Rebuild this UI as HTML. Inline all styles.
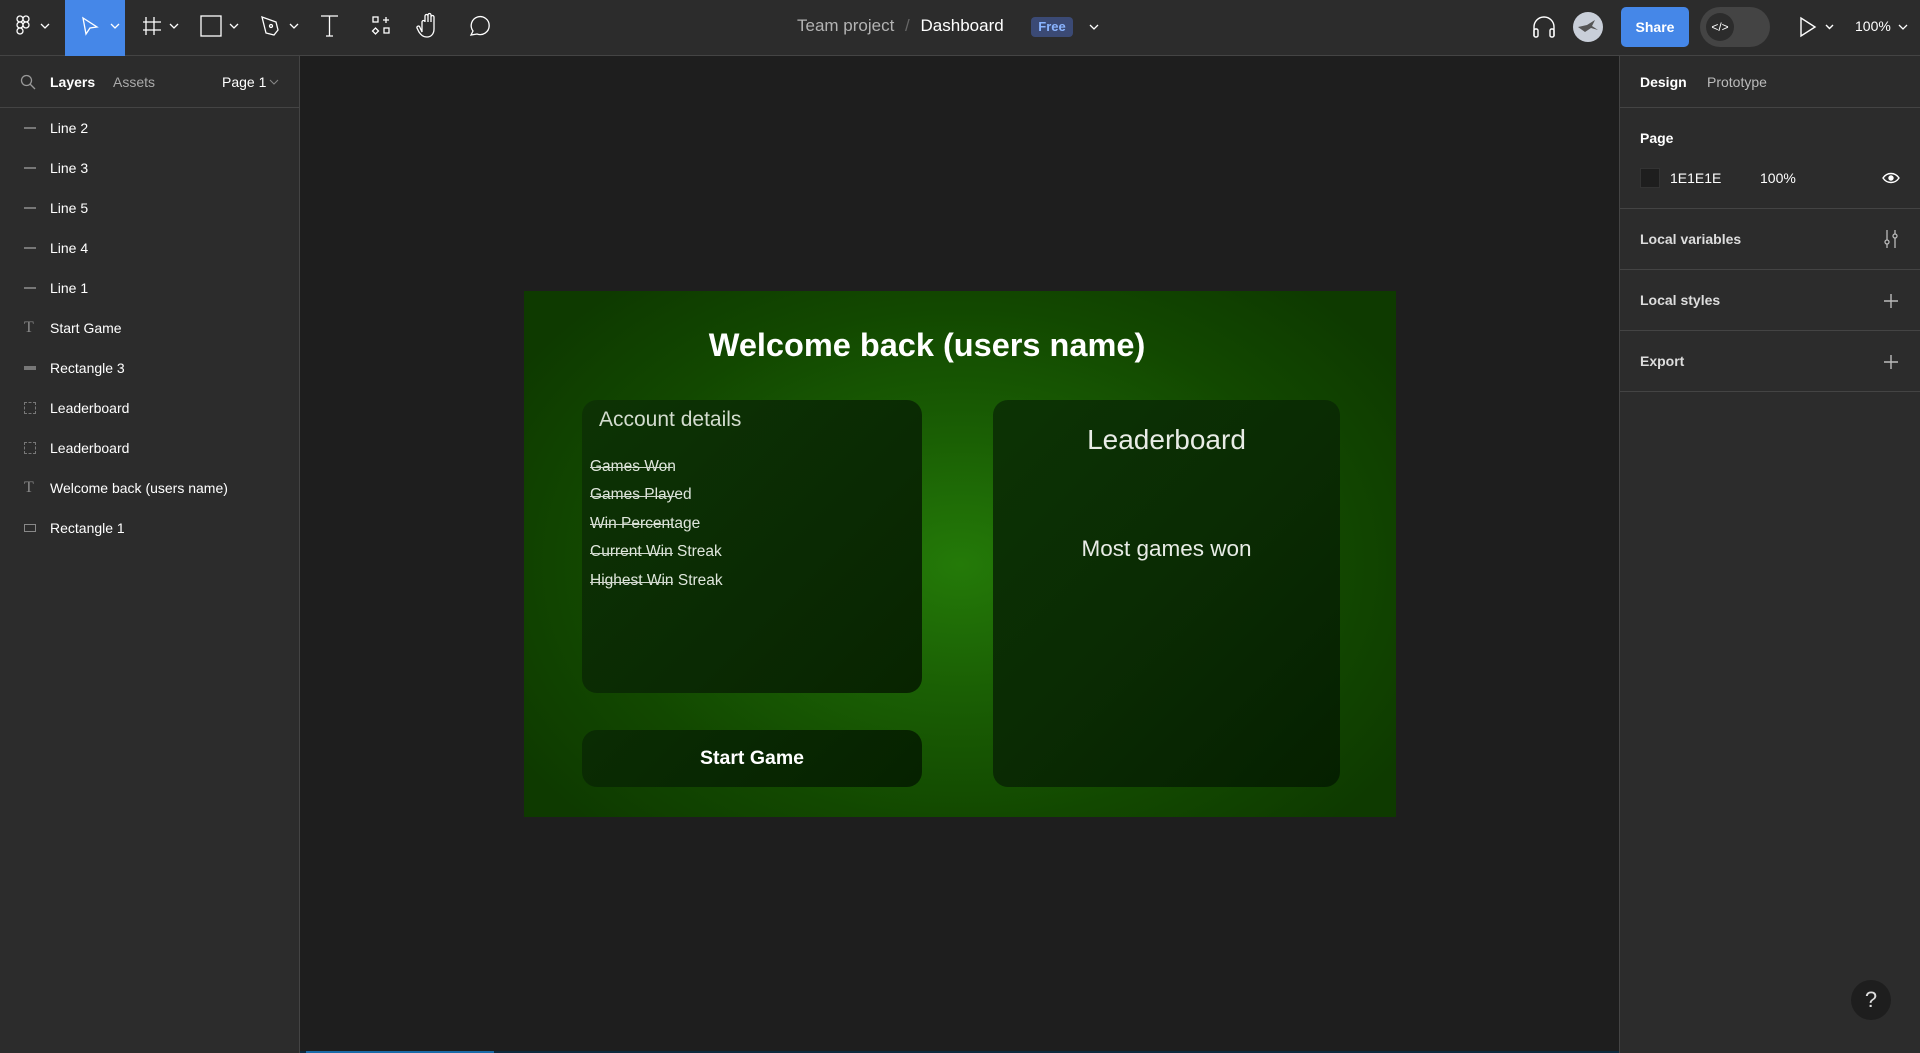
<!DOCTYPE html>
<html><head><meta charset="utf-8"><style>
*{margin:0;padding:0;box-sizing:border-box}
body{width:1920px;height:1053px;background:#1e1e1e;font-family:"Liberation Sans",sans-serif;position:relative;overflow:hidden;color:#fff}
.a{position:absolute;white-space:nowrap}
.top{left:0;top:0;width:1920px;height:56px;background:#2c2c2c;border-bottom:1px solid #444}
.lp{left:0;top:56px;width:300px;height:997px;background:#2c2c2c;border-right:1px solid #444}
.rp{left:1619px;top:56px;width:301px;height:997px;background:#2c2c2c;border-left:1px solid #444}
.row{position:absolute;left:50px;font-size:14px;color:#fff;transform:translateY(-50%);white-space:nowrap}
.ic{position:absolute;left:24px;width:12px;transform:translateY(-50%)}
.hd{position:absolute;left:20px;font-size:14px;font-weight:bold;transform:translateY(-50%);white-space:nowrap}
.sep{position:absolute;left:0;width:301px;height:1px;background:#444}
.li{position:absolute;left:590px;font-size:15.5px;color:#dfe6dc;font-weight:300;white-space:nowrap}
.st{position:absolute;left:590px;height:1px;background:#cfd6cc}
</style></head><body>
<div class="a top">
 <svg class="a" style="left:0;top:0" width="520" height="56" fill="none" stroke="#fff" stroke-width="1.3">
  <g transform="translate(16,16)"><rect x="1" y="0" width="6" height="6" rx="3"/><rect x="7" y="0" width="6" height="6" rx="3"/><rect x="1" y="6" width="6" height="6" rx="3"/><circle cx="10" cy="9" r="3"/><rect x="1" y="12" width="6" height="6" rx="3"/></g>
  <path d="M41 24l4 4 4-4"/>
 </svg>
 <div class="a" style="left:65px;top:0;width:60px;height:56px;background:#4587e8"></div>
 <svg class="a" style="left:0;top:0" width="520" height="56" fill="none" stroke="#fff" stroke-width="1.3">
  <path d="M83 18l3 16 4-6 7-1z"/><path d="M111 24l4 4 4-4"/>
  <path d="M146 17v18M154 17v18M143 22h18M143 30h18"/><path d="M170 24l4 4 4-4"/>
  <rect x="201" y="16" width="20" height="20"/><path d="M230 24l4 4 4-4"/>
  <path d="M262 17l14 5 2 8-4 5-8-2z"/><circle cx="271" cy="26" r="1.5"/><path d="M290 24l4 4 4-4"/>
  <path d="M321 16h17M329.5 16v20M326 36h7"/>
  <rect x="373" y="17" width="5" height="5"/><path d="M386 17v6M383 20h6"/><path d="M375.5 28l3 3-3 3-3-3z"/><rect x="384" y="28" width="5" height="5"/>
  <path d="M422 32v-10a1.5 1.5 0 013 0v-6a1.5 1.5 0 013 0v6-7a1.5 1.5 0 013 0v7-5a1.5 1.5 0 013 0v12c0 5-3 8-7 8s-6-2-8-5l-2-4a1.5 1.5 0 012.5-1.5z"/>
  <path d="M471 35l2-4a9 9 0 11 4 3z"/>
 </svg>
 <div class="a" style="left:797px;top:16px;font-size:17px;color:#b3b3b3">Team project <span style="color:#666;margin:0 6px">/</span> <span style="color:#fff">Dashboard</span></div>
 <div class="a" style="left:1031px;top:17px;width:42px;height:20px;background:#3b4a75;border-radius:4px;font-size:13px;font-weight:bold;color:#8ab4ff;text-align:center;line-height:20px">Free</div>
 <svg class="a" style="left:1088px;top:22px" width="12" height="10" fill="none" stroke="#fff" stroke-width="1.3"><path d="M2 3l4 4 4-4"/></svg>
 <svg class="a" style="left:1530px;top:12px" width="28" height="30" fill="none" stroke="#fff" stroke-width="1.4"><path d="M4 24V15a10 10 0 0120 0v9"/><rect x="4" y="17" width="4" height="8" rx="1.5"/><rect x="20" y="17" width="4" height="8" rx="1.5"/></svg>
 <div class="a" style="left:1573px;top:12px;width:30px;height:30px;border-radius:50%;background:#c9cfd9"></div>
 <svg class="a" style="left:1576px;top:18px" width="24" height="18"><path d="M2 9l9-2 8-5-3 6 6 4-7-2-6 4z" fill="#555"/></svg>
 <div class="a" style="left:1621px;top:7px;width:68px;height:40px;background:#4587e8;border-radius:5px;font-size:14px;font-weight:bold;text-align:center;line-height:40px">Share</div>
 <div class="a" style="left:1700px;top:7px;width:70px;height:40px;background:#444;border-radius:20px"></div>
 <div class="a" style="left:1706px;top:13px;width:28px;height:28px;background:#2c2c2c;border-radius:50%;font-size:12px;text-align:center;line-height:28px">&lt;/&gt;</div>
 <svg class="a" style="left:1798px;top:16px" width="40" height="22" fill="none" stroke="#fff" stroke-width="1.4"><path d="M3 2v18l14-9z"/><path d="M28 9l3.5 3.5L35 9"/></svg>
 <div class="a" style="left:1855px;top:18px;font-size:14px">100%</div>
 <svg class="a" style="left:1897px;top:22px" width="12" height="10" fill="none" stroke="#fff" stroke-width="1.3"><path d="M2 3l4 4 4-4"/></svg>
</div>

<div class="a lp">
 <svg class="a" style="left:20px;top:18px" width="16" height="16" fill="none" stroke="#999" stroke-width="1.3"><circle cx="6.5" cy="6.5" r="5"/><path d="M10 10l5 5"/></svg>
 <div class="a" style="left:50px;top:18px;font-size:14px;font-weight:bold">Layers</div>
 <div class="a" style="left:113px;top:18px;font-size:14px;color:#aaa">Assets</div>
 <div class="a" style="left:222px;top:18px;font-size:14px">Page 1</div>
 <svg class="a" style="left:269px;top:22px" width="10" height="8" fill="none" stroke="#888"><path d="M1 2l4 4 4-4"/></svg>
 <div class="a" style="left:0;top:51px;width:300px;height:1px;background:#444"></div>
 <div style="position:absolute;left:0;top:-56px;width:300px">
  <div class="ic" style="top:128px;height:2px;background:#777"></div><div class="row" style="top:128px">Line 2</div>
  <div class="ic" style="top:168px;height:2px;background:#777"></div><div class="row" style="top:168px">Line 3</div>
  <div class="ic" style="top:208px;height:2px;background:#777"></div><div class="row" style="top:208px">Line 5</div>
  <div class="ic" style="top:248px;height:2px;background:#777"></div><div class="row" style="top:248px">Line 4</div>
  <div class="ic" style="top:288px;height:2px;background:#777"></div><div class="row" style="top:288px">Line 1</div>
  <div class="ic" style="top:328px;color:#888;font-family:'Liberation Serif',serif;font-size:16px;height:auto">T</div><div class="row" style="top:328px">Start Game</div>
  <div class="ic" style="top:368px;height:4px;background:#777"></div><div class="row" style="top:368px">Rectangle 3</div>
  <div class="ic" style="top:408px;height:12px;border:1px dashed #777"></div><div class="row" style="top:408px">Leaderboard</div>
  <div class="ic" style="top:448px;height:12px;border:1px dashed #777"></div><div class="row" style="top:448px">Leaderboard</div>
  <div class="ic" style="top:488px;color:#888;font-family:'Liberation Serif',serif;font-size:16px;height:auto">T</div><div class="row" style="top:488px">Welcome back (users name)</div>
  <div class="ic" style="top:528px;height:8px;border:1.3px solid #888"></div><div class="row" style="top:528px">Rectangle 1</div>
 </div>
</div>

<div class="a rp">
 <div class="a" style="left:20px;top:18px;font-size:14px;font-weight:bold">Design</div>
 <div class="a" style="left:87px;top:18px;font-size:14px;color:#bbb">Prototype</div>
 <div class="sep" style="top:51px"></div>
 <div class="hd" style="top:82px">Page</div>
 <div class="a" style="left:20px;top:112px;width:20px;height:20px;background:#1e1e1e;border:1px solid #333"></div>
 <div class="a" style="left:50px;top:114px;font-size:14px">1E1E1E</div>
 <div class="a" style="left:140px;top:114px;font-size:14px">100%</div>
 <svg class="a" style="left:261px;top:114px" width="20" height="16" fill="none" stroke="#fff" stroke-width="1.4"><path d="M2 8c4-6 12-6 16 0-4 6-12 6-16 0z"/><circle cx="10" cy="8" r="2" fill="#fff"/></svg>
 <div class="sep" style="top:152px"></div>
 <div class="hd" style="top:183px;color:#ddd">Local variables</div>
 <svg class="a" style="left:262px;top:173px" width="18" height="20" fill="none" stroke="#bbb" stroke-width="1.3"><path d="M5 1v10M5 15v4M13 1v4M13 9v10"/><circle cx="5" cy="13" r="2"/><circle cx="13" cy="7" r="2"/></svg>
 <div class="sep" style="top:213px"></div>
 <div class="hd" style="top:244px;color:#ddd">Local styles</div>
 <svg class="a" style="left:263px;top:237px" width="16" height="16" stroke="#bbb" stroke-width="1.4"><path d="M8 1v14M1 8h14"/></svg>
 <div class="sep" style="top:274px"></div>
 <div class="hd" style="top:305px;color:#ddd">Export</div>
 <svg class="a" style="left:263px;top:298px" width="16" height="16" stroke="#bbb" stroke-width="1.4"><path d="M8 1v14M1 8h14"/></svg>
 <div class="sep" style="top:335px"></div>
 <div class="a" style="left:231px;top:924px;width:40px;height:40px;border-radius:50%;background:#1e1e1e;color:#ddd;font-size:22px;text-align:center;line-height:40px">?</div>
</div>
<div class="a" style="left:300px;top:1051px;width:1319px;height:2px;background:#0d2a3d"></div>
<div class="a" style="left:306px;top:1051px;width:188px;height:2px;background:#1a6ba8"></div>

<div class="a" style="left:524px;top:291px;width:872px;height:526px;background:radial-gradient(ellipse 60% 70% at 50% 52%,#247a08 0%,#1a5f04 35%,#124800 70%,#0e3a00 100%)">
 <div class="a" style="left:0;top:36px;width:806px;text-align:center;font-size:32.5px;font-weight:bold">Welcome back (users name)</div>
</div>
<div class="a" style="left:582px;top:400px;width:340px;height:293px;border-radius:15px;background:linear-gradient(135deg,#0d3304,#0a2a03 60%,#082400)"></div>
<div class="a" style="left:599px;top:408px;font-size:21px;color:#d3dccf;font-weight:300">Account details</div>
<div class="li" style="top:458px">Games Won</div><div class="st" style="top:467px;width:83px"></div>
<div class="li" style="top:486px">Games Played</div><div class="st" style="top:496px;width:86px"></div>
<div class="li" style="top:515px">Win Percentage</div><div class="st" style="top:524px;width:83px"></div>
<div class="li" style="top:543px">Current Win Streak</div><div class="st" style="top:553px;width:83px"></div>
<div class="li" style="top:572px">Highest Win Streak</div><div class="st" style="top:582px;width:83px"></div>
<div class="a" style="left:582px;top:730px;width:340px;height:57px;border-radius:15px;background:linear-gradient(135deg,#0a2c03,#062200);font-size:19.5px;font-weight:bold;text-align:center;line-height:57px">Start Game</div>
<div class="a" style="left:993px;top:400px;width:347px;height:387px;border-radius:15px;background:linear-gradient(135deg,#0c3304,#0a2b03 50%,#052000)">
 <div class="a" style="left:0;top:24px;width:347px;text-align:center;font-size:28px;color:#e8ece6">Leaderboard</div>
 <div class="a" style="left:0;top:136px;width:347px;text-align:center;font-size:22.5px;color:#e8ece6">Most games won</div>
</div>
</body></html>
